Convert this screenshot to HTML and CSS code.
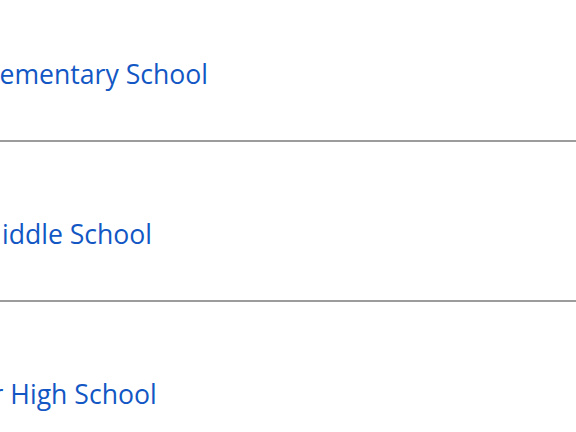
FILE: index.html
```html
<!DOCTYPE html>
<html>
<head>
<meta charset="utf-8">
<link rel="stylesheet" href="styles.css">
</head>
<body>
<ul class="school-list">
  <li class="school-item"><a class="school-link" href="#">Elementary School</a></li>
  <li class="school-item"><a class="school-link" href="#">Middle School</a></li>
  <li class="school-item"><a class="school-link" href="#">Sr High School</a></li>
</ul>
</body>
</html>
```
FILE: styles.css
```css
html, body {
  margin: 0;
  padding: 0;
  background: #ffffff;
  overflow: hidden;
  height: 432px;
}
.school-list {
  list-style: none;
  margin: -18px 0 0 -22px;
  padding: 0;
  font-family: "Open Sans", sans-serif;
}
.school-item {
  height: 160px;
  display: flex;
  align-items: center;
  border-bottom: 2px solid #9c9c9c;
  box-sizing: border-box;
  padding-top: 26px;
}
.school-link {
  color: #1257c4;
  text-decoration: none;
  font-size: 26.6px;
}
```
